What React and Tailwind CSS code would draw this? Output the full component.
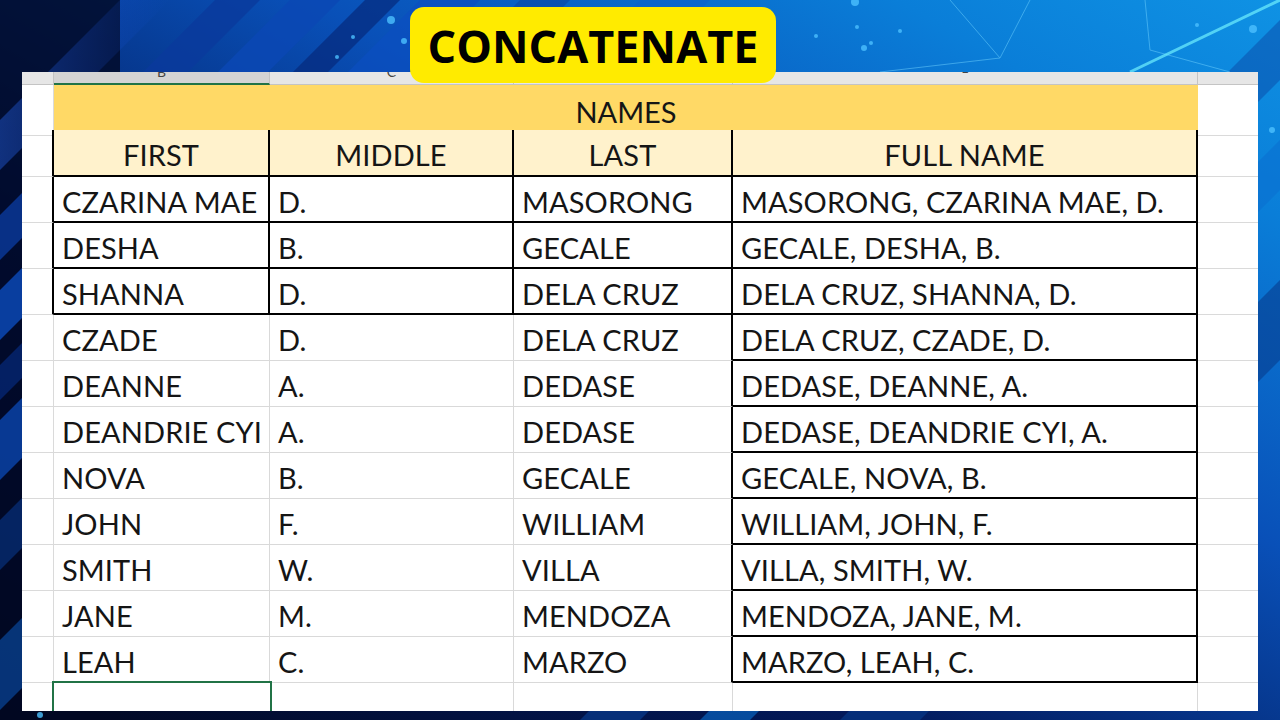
import React from 'react';

const rows = [
  ['CZARINA MAE', 'D.', 'MASORONG', 'MASORONG, CZARINA MAE, D.'],
  ['DESHA', 'B.', 'GECALE', 'GECALE, DESHA, B.'],
  ['SHANNA', 'D.', 'DELA CRUZ', 'DELA CRUZ, SHANNA, D.'],
  ['CZADE', 'D.', 'DELA CRUZ', 'DELA CRUZ, CZADE, D.'],
  ['DEANNE', 'A.', 'DEDASE', 'DEDASE, DEANNE, A.'],
  ['DEANDRIE CYI', 'A.', 'DEDASE', 'DEDASE, DEANDRIE CYI, A.'],
  ['NOVA', 'B.', 'GECALE', 'GECALE, NOVA, B.'],
  ['JOHN', 'F.', 'WILLIAM', 'WILLIAM, JOHN, F.'],
  ['SMITH', 'W.', 'VILLA', 'VILLA, SMITH, W.'],
  ['JANE', 'M.', 'MENDOZA', 'MENDOZA, JANE, M.'],
  ['LEAH', 'C.', 'MARZO', 'MARZO, LEAH, C.'],
];

const stripe = (a, w) => `${a},0 ${a + w},0 ${a + w - 760},760 ${a - 760},760`;

const Backdrop = () => (
  <svg className="absolute inset-0" width="1280" height="720" viewBox="0 0 1280 720">
    <defs>
      <linearGradient id="bg" x1="0" y1="1" x2="1" y2="0">
        <stop offset="0" stopColor="#010720" />
        <stop offset="0.35" stopColor="#031a5c" />
        <stop offset="0.62" stopColor="#0950b8" />
        <stop offset="0.85" stopColor="#0a7ed8" />
        <stop offset="1" stopColor="#0f92e4" />
      </linearGradient>
      <linearGradient id="glow" x1="0" y1="0" x2="1" y2="0">
        <stop offset="0" stopColor="#1b5cff" stopOpacity="0" />
        <stop offset="0.5" stopColor="#3f86ff" stopOpacity="0.9" />
        <stop offset="1" stopColor="#1b5cff" stopOpacity="0" />
      </linearGradient>
    </defs>
    <rect width="1280" height="720" fill="url(#bg)" />
    <rect width="120" height="720" fill="#010822" opacity="0.8" />
    <polygon points={stripe(120, 50)} fill="url(#glow)" />
    <polygon points={stripe(215, 45)} fill="#0a3a9c" opacity="0.8" />
    <polygon points={stripe(290, 50)} fill="#0b48b4" opacity="0.85" />
    <polygon points={stripe(365, 35)} fill="#062a7c" opacity="0.7" />
    <polygon points={stripe(420, 60)} fill="#0b4fc0" opacity="0.7" />
    <polygon points={stripe(520, 50)} fill="#0a3f9e" opacity="0.5" />
    <polygon points={stripe(640, 70)} fill="#0b5fcc" opacity="0.5" />
    <polygon points={stripe(1300, 60)} fill="#0a4aa8" opacity="0.5" />
    <polygon points={stripe(1420, 50)} fill="#0a6fd0" opacity="0.6" />
    <polygon points={stripe(1560, 80)} fill="#063c8e" opacity="0.6" />
    <g stroke="#6fd2ff" strokeWidth="1" opacity="0.5">
      <line x1="950" y1="0" x2="1000" y2="58" />
      <line x1="1030" y1="0" x2="1000" y2="58" />
      <line x1="880" y1="72" x2="1000" y2="58" />
      <line x1="1145" y1="0" x2="1150" y2="50" />
      <line x1="1150" y1="50" x2="1230" y2="72" />
    </g>
    <line x1="1130" y1="72" x2="1280" y2="0" stroke="#6ff0ff" strokeWidth="3" opacity="0.7" />
    <g fill="#4cc0ff" opacity="0.8">
      <circle cx="855" cy="2" r="4" />
      <circle cx="857" cy="27" r="2" />
      <circle cx="864" cy="48" r="3" />
      <circle cx="871" cy="43" r="2" />
      <circle cx="900" cy="31" r="2" />
      <circle cx="816" cy="36" r="2" />
      <circle cx="1253" cy="29" r="4" />
      <circle cx="1197" cy="25" r="2" />
      <circle cx="391" cy="20" r="4" />
      <circle cx="404" cy="41" r="3" />
      <circle cx="353" cy="37" r="2" />
      <circle cx="337" cy="57" r="2" />
      <circle cx="1272" cy="130" r="3" />
      <circle cx="40" cy="715" r="3" />
    </g>
  </svg>
);

const cell = 'flex items-center px-2 pt-[5px] text-[29px] tracking-[0.1px] text-[#151515] whitespace-nowrap overflow-hidden';

export default function App() {
  return (
    <div className="relative w-[1280px] h-[720px] overflow-hidden bg-[#031a5c] pt-[72px] pl-[22px] font-['Lato',sans-serif]">
      <Backdrop />
      <div className="relative w-[1236px] h-[639px] bg-white overflow-hidden">
        <div className="grid grid-cols-[32px_216px_244px_219px_465px_60px] h-[13px] bg-[#e6e6e6] text-[14px] text-[#444]">
          <div className="border-r border-b border-[#c4c4c4]" />
          <div className="flex justify-center bg-[#d4d4d4] border-r border-[#c4c4c4] border-b-2 border-b-[#217346] overflow-hidden"><span className="-mt-[11px]">B</span></div>
          <div className="flex justify-center border-r border-b border-[#c4c4c4] overflow-hidden"><span className="-mt-[11px]">C</span></div>
          <div className="border-r border-b border-[#c4c4c4]" />
          <div className="flex justify-center border-r border-b border-[#c4c4c4] overflow-hidden"><span className="-mt-[12px] text-[12px]">E</span></div>
          <div className="border-b border-[#c4c4c4]" />
        </div>

        <div className="grid grid-cols-[32px_216px_244px_219px_465px_60px] h-[45px]">
          <div className="border-r border-b border-[#dadada]" />
          <div className="col-span-4 flex items-center justify-center pt-[5px] bg-[#ffd966] border-b-2 border-black text-[29px] text-[#151515]">NAMES</div>
          <div className="border-b border-[#dadada]" />
        </div>

        <div className="grid grid-cols-[32px_216px_244px_219px_465px_60px] h-[47px]">
          <div className="border-r-2 border-r-black border-b border-b-[#dadada]" />
          <div className={`${cell} justify-center bg-[#fff2cc] border-r-2 border-b-2 border-black`}>FIRST</div>
          <div className={`${cell} justify-center bg-[#fff2cc] border-r-2 border-b-2 border-black`}>MIDDLE</div>
          <div className={`${cell} justify-center bg-[#fff2cc] border-r-2 border-b-2 border-black`}>LAST</div>
          <div className={`${cell} justify-center bg-[#fff2cc] border-r-2 border-b-2 border-black`}>FULL NAME</div>
          <div className="border-b border-[#dadada]" />
        </div>

        {rows.map((r, i) => {
          const dark = i < 3;
          const line = dark ? 'border-r-2 border-b-2 border-black' : 'border-r border-b border-[#d9d9d9]';
          return (
            <div key={i} className="grid grid-cols-[32px_216px_244px_219px_465px_60px] h-[46px]">
              <div className={dark ? 'border-r-2 border-r-black border-b border-b-[#dadada]' : 'border-r border-b border-[#dadada]'} />
              <div className={`${cell} ${line}`}>{r[0]}</div>
              <div className={`${cell} ${line}`}>{r[1]}</div>
              <div className={`${cell} border-r-2 border-r-black ${dark ? 'border-b-2 border-b-black' : 'border-b border-b-[#d9d9d9]'}`}>{r[2]}</div>
              <div className={`${cell} border-r-2 border-b-2 border-black`}>{r[3]}</div>
              <div className="border-b border-[#dadada]" />
            </div>
          );
        })}

        <div className="grid grid-cols-[32px_216px_244px_219px_465px_60px] h-[40px]">
          <div className="border-r border-[#dadada]" />
          <div className="relative z-10 shadow-[0_0_0_2px_#217346]" />
          <div className="border-r border-[#d9d9d9]" />
          <div className="border-r border-[#d9d9d9]" />
          <div className="border-r border-[#d9d9d9]" />
          <div />
        </div>
      </div>

      <div className="absolute left-[410px] top-[7px] w-[366px] h-[76px] rounded-[14px] bg-[#ffeb00] flex items-center justify-center">
        <span className="font-['Open_Sans',sans-serif] font-bold text-[45px] leading-none text-black">CONCATENATE</span>
      </div>
    </div>
  );
}
